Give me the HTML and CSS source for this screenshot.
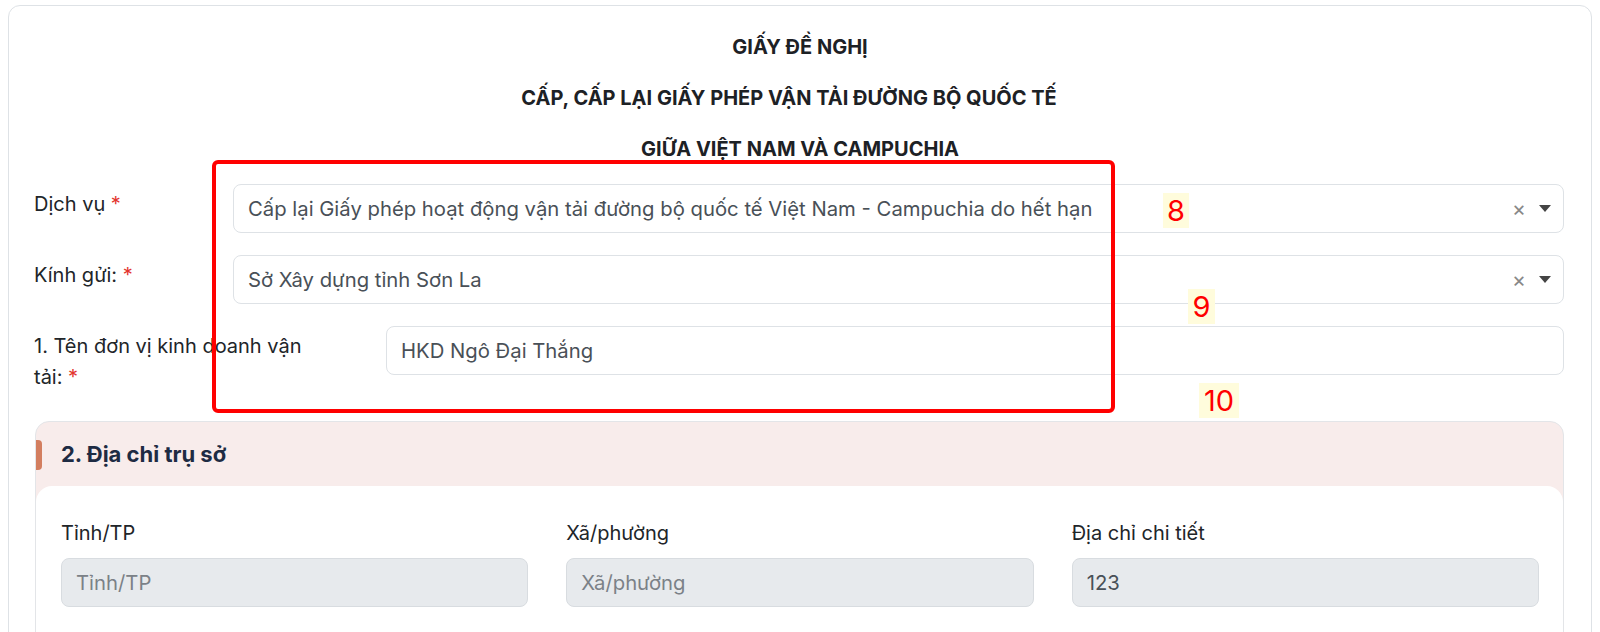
FILE: index.html
```html
<!DOCTYPE html>
<html lang="vi">
<head>
<meta charset="utf-8">
<title>Giấy đề nghị</title>
<link rel="stylesheet" href="styles.css">
</head>
<body>
<div class="page">
  <div class="card">
    <div class="doc-title">
      <p>GIẤY ĐỀ NGHỊ</p>
      <p class="mid">CẤP, CẤP LẠI GIẤY PHÉP VẬN TẢI ĐƯỜNG BỘ QUỐC TẾ</p>
      <p class="last">GIỮA VIỆT NAM VÀ CAMPUCHIA</p>
    </div>

    <div class="form">
      <div class="row">
        <label class="lbl lbl-narrow">Dịch vụ <span class="req">*</span></label>
        <div class="select">
          <span class="value">Cấp lại Giấy phép hoạt động vận tải đường bộ quốc tế Việt Nam - Campuchia do hết hạn</span>
          <span class="clear">×</span>
          <svg class="caret" width="12" height="7" viewBox="0 0 12 7"><path d="M0 0h12L6 7z" fill="#444"/></svg>
        </div>
      </div>
      <div class="row">
        <label class="lbl lbl-narrow">Kính gửi: <span class="req">*</span></label>
        <div class="select">
          <span class="value">Sở Xây dựng tỉnh Sơn La</span>
          <span class="clear">×</span>
          <svg class="caret" width="12" height="7" viewBox="0 0 12 7"><path d="M0 0h12L6 7z" fill="#444"/></svg>
        </div>
      </div>
      <div class="row">
        <label class="lbl lbl-wide">1. Tên đơn vị kinh doanh vận tải: <span class="req">*</span></label>
        <div class="input">HKD Ngô Đại Thắng</div>
      </div>
    </div>

    <section class="panel">
      <div class="panel-head">
        <span class="accent"></span>
        <h2>2. Địa chỉ trụ sở</h2>
      </div>
      <div class="panel-body">
        <div class="field">
          <label>Tỉnh/TP</label>
          <div class="input disabled placeholder">Tỉnh/TP</div>
        </div>
        <div class="field">
          <label>Xã/phường</label>
          <div class="input disabled placeholder">Xã/phường</div>
        </div>
        <div class="field">
          <label>Địa chỉ chi tiết</label>
          <div class="input disabled">123</div>
        </div>
      </div>
    </section>
  </div>

  <div class="mark-box"></div>
  <span class="tag tag-8">8</span>
  <span class="tag tag-9">9</span>
  <span class="tag tag-10">10</span>
</div>
</body>
</html>
```

FILE: styles.css
```css
* { box-sizing: border-box; }
html, body { margin: 0; padding: 0; background: #fff; }
body {
  font-family: Inter, "Noto Sans", "Liberation Sans", sans-serif;
  color: #212529;
}
.page {
  position: relative;
  padding: 5px 8px 0 8px;
}
.card {
  border: 1px solid #dee2e6;
  border-radius: 12px;
  padding: 28px 27px 0 25px;
  height: 700px;
}
.doc-title { text-align: center; }
.doc-title p {
  margin: 0 0 25px 0;
  font-size: 20px;
  font-weight: 700;
  line-height: 26px;
  color: #1d2125;
  letter-spacing: 0;
  padding-left: 2px;
}
.doc-title p.mid { padding-left: 0; padding-right: 20px; }
.doc-title p.last { margin-bottom: 22px; }

.form { display: flex; flex-direction: column; gap: 22px; }
.row { display: flex; align-items: flex-start; }
.lbl {
  flex: none;
  font-size: 20px;
  line-height: 31px;
  padding-top: 5px;
  color: #212529;
}
.lbl-narrow { width: 199px; }
.lbl-wide { width: 352px; padding-right: 60px; }
.req { color: #e3342f; }

.select, .input {
  flex: 1;
  height: 49px;
  border: 1px solid #dee2e6;
  border-radius: 8px;
  display: flex;
  align-items: center;
  padding: 0 12px 0 14px;
  font-size: 20.3px;
  color: #495057;
  background: #fff;
}
.select .value { flex: 1; white-space: nowrap; overflow: hidden; }
.select .clear {
  color: #888;
  font-size: 21px;
  margin-right: 13px;
  line-height: 1;
}
.select .caret { flex: none; }

.panel {
  margin-top: 28px;
  margin-left: 1px;
  border: 1px solid #e3e5e8;
  border-radius: 14px;
  background: #f8eceb;
  overflow: hidden;
}
.panel-head {
  position: relative;
  height: 64px;
  display: flex;
  align-items: center;
  padding-left: 25px;
}
.accent {
  position: absolute;
  left: 0;
  top: 18px;
  width: 6px;
  height: 30px;
  background: #d37e5f;
  border-radius: 0 4px 4px 0;
}
.panel-head h2 {
  margin: 0;
  font-size: 22px;
  font-weight: 700;
  color: #1e2b43;
}
.panel-body {
  background: #fff;
  border-radius: 16px 16px 0 0;
  padding: 32px 24px 40px 25px;
  display: grid;
  grid-template-columns: 1fr 1fr 1fr;
  column-gap: 38px;
}
.field label {
  display: block;
  font-size: 20px;
  line-height: 30px;
  margin-bottom: 10px;
  color: #212529;
}
.input.disabled {
  background: #e7eaed;
  border-color: #d8dce0;
}
.input.placeholder { color: #7b8187; }

.mark-box {
  position: absolute;
  left: 212px;
  top: 160px;
  width: 903px;
  height: 253px;
  border: 4px solid #ff0000;
  border-radius: 6px;
}
.tag {
  position: absolute;
  background: #fffcdc;
  color: #ff0000;
  font-family: Inter, "Liberation Sans", sans-serif;
  font-size: 29px;
  line-height: 35px;
  height: 35px;
  text-align: center;
}
.tag-8 { left: 1163px; top: 193px; width: 26px; }
.tag-9 { left: 1188px; top: 289px; width: 27px; }
.tag-10 { left: 1199px; top: 383px; width: 40px; }
```
